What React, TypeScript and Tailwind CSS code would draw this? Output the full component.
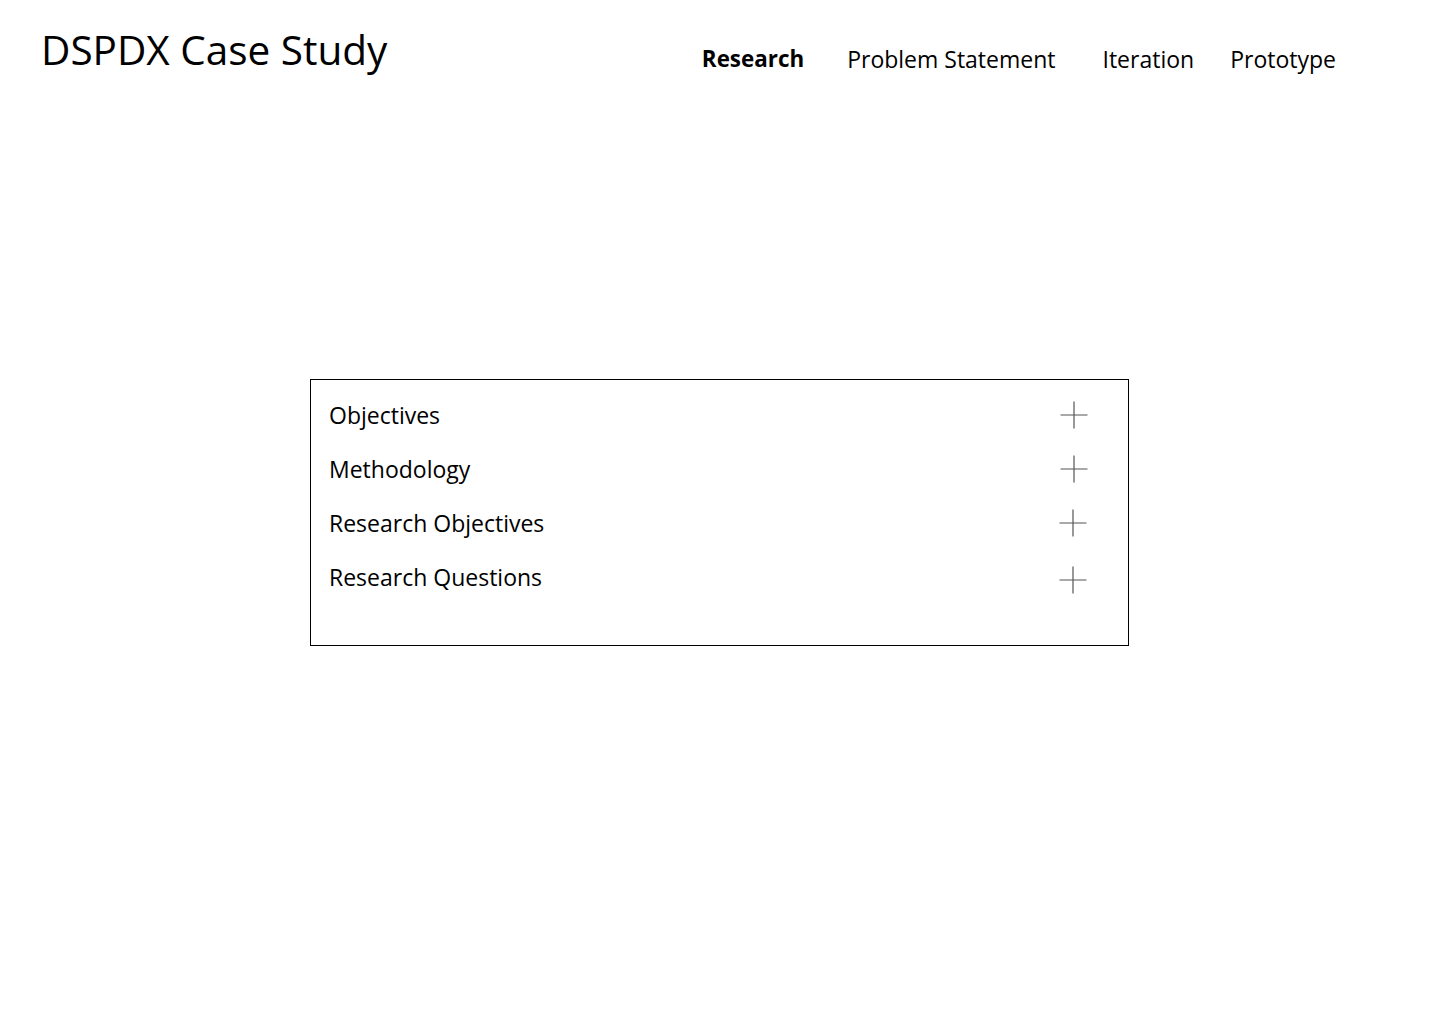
const SECTIONS = ['Objectives', 'Methodology', 'Research Objectives', 'Research Questions'];

function Plus({ className = '' }: { className?: string }) {
  return (
    <svg width="28" height="28" viewBox="0 0 28 28" className={`shrink-0 ${className}`}>
      <path d="M14 0.5V27.5M0.5 14H27.5" stroke="#555" strokeWidth="1.2" fill="none" />
    </svg>
  );
}

export default function App() {
  return (
    <div className="min-h-screen bg-white text-black font-['Open_Sans','Liberation_Sans',sans-serif]">
      {/* Header */}
      <header className="flex items-start pl-[41px] pt-[23px]">
        <h1 className="text-[40.5px] leading-[54px] font-normal">DSPDX Case Study</h1>
        <nav className="ml-auto mr-[104px] mt-[21px] flex items-center text-[23px] leading-[30px]">
          <a className="font-bold text-[22.4px]">Research</a>
          <a className="ml-[43px]">Problem Statement</a>
          <a className="ml-[47px]">Iteration</a>
          <a className="ml-[36px]">Prototype</a>
        </nav>
      </header>

      {/* Accordion */}
      <main className="pl-[310px] pt-[302px]">
        <div className="w-[819px] h-[267px] border border-black pl-[18px] pr-[40px] pt-[8px]">
          {SECTIONS.map((s, i) => (
            <div key={s} className="flex items-center justify-between h-[54px]">
              <span className="text-[23px]">{s}</span>
              <Plus className={i === 3 ? 'mt-[6px] mr-[1px]' : i === 2 ? 'mr-[1px]' : ''} />
            </div>
          ))}
        </div>
      </main>
    </div>
  );
}
